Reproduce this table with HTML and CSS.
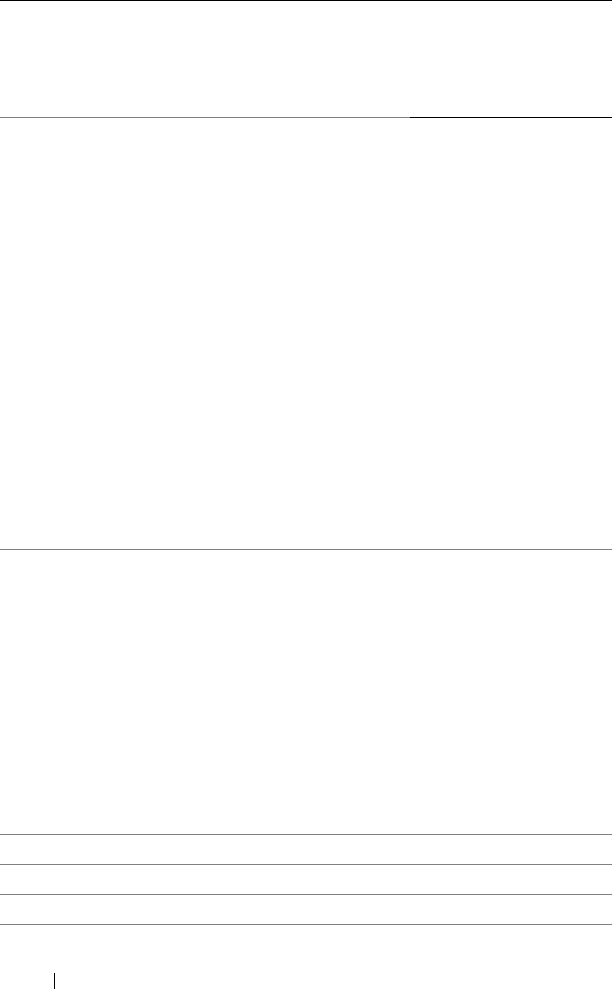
FILE: index.html
```html
<!DOCTYPE html>
<html>
<head>
<meta charset="utf-8">
<link rel="stylesheet" href="styles.css">
</head>
<body>
<div class="page">
  <header class="head"></header>
  <div class="split"><span class="split-gray"></span><span class="split-black"></span></div>
  <section class="block-one"></section>
  <section class="block-two"></section>
  <div class="rows">
    <div class="row"></div>
    <div class="row"></div>
    <div class="row"></div>
  </div>
  <footer class="foot"><span class="foot-bar"></span></footer>
</div>
</body>
</html>
```
FILE: styles.css
```css
html, body {
  margin: 0;
  padding: 0;
  background: #ffffff;
  font-family: "Liberation Sans", Arial, sans-serif;
}
.page {
  width: 612px;
  height: 989px;
  overflow: hidden;
  display: flex;
  flex-direction: column;
}
.head {
  height: 116px;
  border-top: 1px solid #000000;
  flex: none;
}
.split {
  display: flex;
  height: 1px;
  flex: none;
}
.split-gray {
  width: 410px;
  background: #808080;
}
.split-black {
  flex: 1;
  background: #000000;
}
.block-one {
  height: 431px;
  border-bottom: 1px solid #808080;
  flex: none;
}
.block-two {
  height: 284px;
  border-bottom: 1px solid #808080;
  flex: none;
}
.rows {
  display: flex;
  flex-direction: column;
  flex: none;
}
.row {
  height: 29px;
  border-bottom: 1px solid #808080;
}
.foot {
  padding-top: 48px;
  padding-left: 54px;
  flex: none;
}
.foot-bar {
  display: block;
  width: 1px;
  height: 16px;
  background: #000000;
}
```
